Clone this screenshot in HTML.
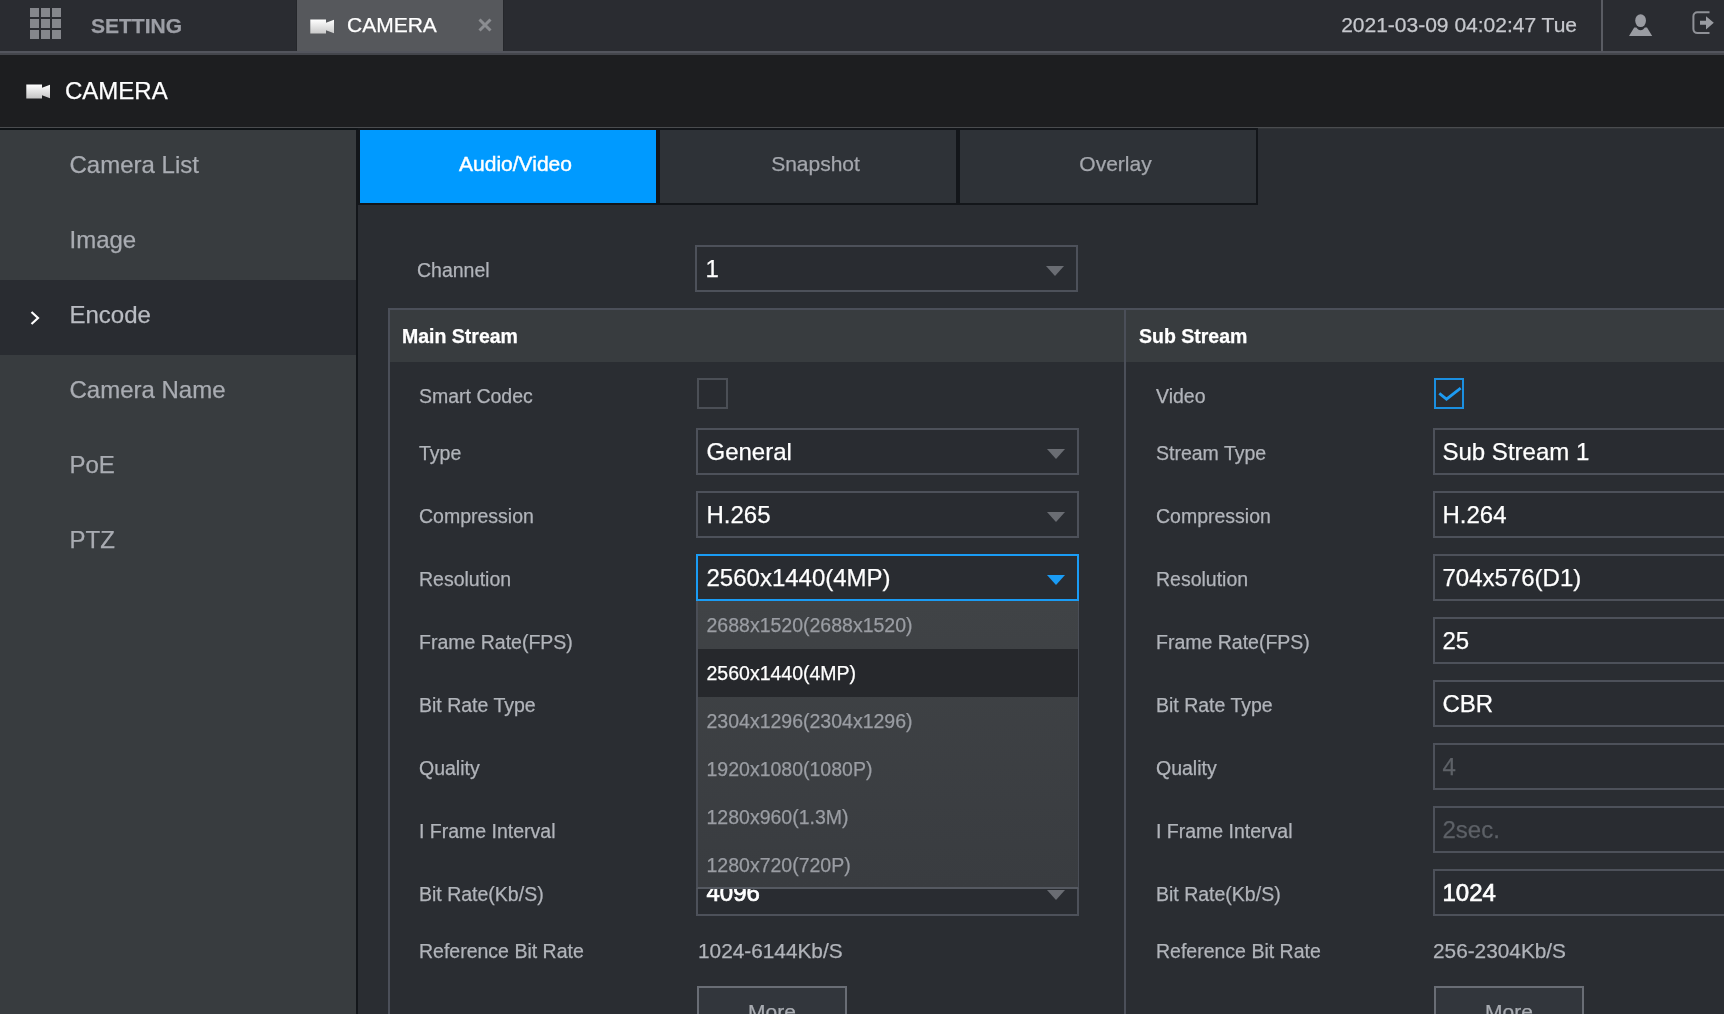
<!DOCTYPE html>
<html lang="en">
<head>
<meta charset="utf-8">
<title>CAMERA - Encode</title>
<style>
*{box-sizing:border-box;margin:0;padding:0}
html,body{width:1724px;height:1014px;overflow:hidden;background:#2a2d32}
body{position:relative;font-family:"Liberation Sans",Arial,sans-serif;color:#b4b7bd;-webkit-text-stroke:0.25px}
.abs{position:absolute}
#root{position:absolute;left:0;top:0;width:1724px;height:1014px;will-change:transform}
/* top bar */
#topbar{position:absolute;left:0;top:0;width:1724px;height:51px;background:#2a2c31}
#topline{position:absolute;left:0;top:51px;width:1724px;height:4px;background:linear-gradient(#53555d 0,#53555d 50%,#44464c 50%,#44464c 100%)}
#setting{position:absolute;left:91px;top:0;height:51px;line-height:51px;font-size:21px;font-weight:bold;color:#9c9ea5}
#toptab{position:absolute;left:296px;top:0;width:208px;height:52px;background:#56585c;border-left:1px solid #25272b;border-right:1px solid #25272b}
#toptab .t{position:absolute;left:50px;top:0;line-height:49px;font-size:21px;color:#fff}
#date{position:absolute;right:147px;top:0;line-height:50px;font-size:21px;color:#c6c8cd;white-space:nowrap}
#vsep{position:absolute;left:1601px;top:0;width:2px;height:51px;background:#5a5c63}
/* header */
#header{position:absolute;left:0;top:55px;width:1724px;height:72px;background:#1d1e20}
#header .t{position:absolute;left:65px;top:0;line-height:72px;font-size:24px;color:#fff}
#hline{position:absolute;left:0;top:127px;width:1724px;height:1px;background:#4a4c4f;z-index:5}
#sdark{position:absolute;left:0;top:128px;width:358px;height:2px;background:#0f1316;z-index:5}
#hline2{position:absolute;left:1258px;top:128px;width:466px;height:1px;background:#323538}
/* sidebar */
#sidebar{position:absolute;left:0;top:129px;width:356px;height:885px;background:#383c3f}
#sidebar .it{position:absolute;left:0;width:356px;height:75px;line-height:71px;padding-left:69.5px;font-size:24px;color:#a9acb2}
#sidebar .it.cur{background:#292c31;color:#b9bcc2}
#vdiv{position:absolute;left:356px;top:129px;width:2px;height:885px;background:#13161a}
/* tabs */
.tab{position:absolute;top:128px;width:300px;height:77px;border:2px solid #13161a;background:#2e3237;text-align:center;padding-left:15px;line-height:67px;font-size:21px;color:#a4a7ad}
.tab.on{background:#009aff;color:#fff;-webkit-text-stroke:0.45px #fff}
/* form */
.lbl{position:absolute;font-size:19.5px;color:#b1b4ba;white-space:nowrap;line-height:24px}
.sel{position:absolute;height:47px;border:2px solid #4d515a;background:#292c31;font-size:24px;color:#fff;line-height:43px;padding-left:8.5px;white-space:nowrap;overflow:hidden}
.sel.dis{color:#5d6167}
.sel.b{-webkit-text-stroke:0.7px #fff}
.sel .ar{position:absolute;right:12px;top:19px;width:0;height:0;border-left:9px solid transparent;border-right:9px solid transparent;border-top:10px solid #6a6d73}
.val{position:absolute;font-size:20.8px;color:#b1b4ba;white-space:nowrap;line-height:24px}
.btn{position:absolute;width:150px;height:52px;border:2px solid #696d75;background:#32363c;font-size:21px;color:#a9acb2;text-align:center;line-height:47px}

#tbl{position:absolute;left:388px;top:308px;width:1400px;height:760px;border-left:2px solid #4b4f59;border-top:2px solid #4b4f59}
#thead{position:absolute;left:390px;top:310px;width:1340px;height:52px;background:#383c3f}
#cdiv{position:absolute;left:1124px;top:310px;width:2px;height:720px;background:#4b4f59}
.th{position:absolute;top:324px;font-size:19.5px;font-weight:bold;color:#fff;line-height:24px;white-space:nowrap}
.cb{position:absolute;width:31px;height:31px;border:2px solid #4b4f56;background:#292c31}
.cb.on{border-color:#1b8fe0}
.sel.focus{border-color:#1a9cf5}
.sel.focus .ar{border-top-color:#1a9cf5}
#dd{position:absolute;left:696px;top:601px;width:383px;height:288px;background:linear-gradient(#404346,#393c40);border-left:2px solid #4a4e57;border-right:1px solid #4a4e57;border-bottom:2px solid #555961}
#dd div{position:absolute;left:0;width:380px;height:48px;line-height:49px;padding-left:8.5px;font-size:19.5px;color:#9a9da3;white-space:nowrap}
#dd div.cur{background:#26282c;color:#fff}
</style>
</head>
<body>
<div id="root">
<div id="topbar">
<svg class="abs" style="left:30px;top:8px" width="31" height="31" viewBox="0 0 31 31"><g fill="#85878c"><rect x="0" y="0" width="9" height="9"/><rect x="11" y="0" width="9" height="9"/><rect x="22" y="0" width="9" height="9"/><rect x="0" y="11" width="9" height="9"/><rect x="11" y="11" width="9" height="9"/><rect x="22" y="11" width="9" height="9"/><rect x="0" y="22" width="9" height="9"/><rect x="11" y="22" width="9" height="9"/><rect x="22" y="22" width="9" height="9"/></g></svg>
<div id="setting">SETTING</div>
<div id="toptab">
<svg class="abs" style="left:13px;top:19px" width="25" height="15" viewBox="0 0 25 15"><defs><linearGradient id="cg1" x1="0" y1="0" x2="0" y2="1"><stop offset="0" stop-color="#ffffff"/><stop offset="1" stop-color="#c9c9c9"/></linearGradient></defs><path d="M0.3 0.5h15.700v3.200l8-3v13.600l-8-3v3.200h-15.700z" fill="url(#cg1)"/></svg>
<div class="t">CAMERA</div>
<svg class="abs" style="left:181px;top:18px" width="14" height="14" viewBox="0 0 14 14"><path d="M1.5 1.5l11 11M12.5 1.5l-11 11" stroke="#8b8d91" stroke-width="3" fill="none"/></svg>
</div>
<div id="date">2021-03-09 04:02:47 Tue</div>
<div id="vsep"></div>
<svg class="abs" style="left:1628px;top:13px" width="26" height="24" viewBox="0 0 26 24"><g fill="#9a9ca2"><ellipse cx="12.6" cy="7.6" rx="5.4" ry="6.4"/><path d="M6.2 14.6h2.2c0.9 1.6 2.4 2.6 4.2 2.6s3.300-1 4.200-2.600h2.200l5.200 8.400h-23.200z"/></g></svg>
<svg class="abs" style="left:1690px;top:9px" width="26" height="28" viewBox="0 0 26 28"><path d="M19.5 3.3h-12.1a4 4 0 0 0-4 4v12.800a4 4 0 0 0 4 4h12.100" stroke="#8f9197" stroke-width="2" fill="none"/><path d="M10 11.8h6v-4.6l7.8 6.6-7.8 6.6v-4.6h-6z" fill="#9a9ca2"/></svg>
</div>
<div id="topline"></div>
<div id="header">
<svg class="abs" style="left:26px;top:29px" width="25" height="15" viewBox="0 0 25 15"><defs><linearGradient id="cg2" x1="0" y1="0" x2="0" y2="1"><stop offset="0" stop-color="#ffffff"/><stop offset="1" stop-color="#c4c4c4"/></linearGradient></defs><path d="M0.3 0.5h15.700v3.200l8-3v13.600l-8-3v3.200h-15.700z" fill="url(#cg2)"/></svg>
<div class="t">CAMERA</div></div>
<div id="hline"></div><div id="sdark"></div><div id="hline2"></div>
<div id="sidebar">
<div class="it" style="top:0">Camera List</div>
<div class="it" style="top:75px">Image</div>
<div class="it cur" style="top:151px;line-height:69px">Encode<svg class="abs" style="left:29px;top:29px" width="12" height="18" viewBox="0 0 12 18"><path d="M2.5 3l6.5 6-6.5 6" stroke="#fff" stroke-width="2.2" fill="none"/></svg></div>
<div class="it" style="top:225px">Camera Name</div>
<div class="it" style="top:300px">PoE</div>
<div class="it" style="top:375px">PTZ</div>
</div>
<div id="vdiv"></div>
<div class="tab on" style="left:358px">Audio/Video</div>
<div class="tab" style="left:658px">Snapshot</div>
<div class="tab" style="left:958px">Overlay</div>
<div class="lbl" style="left:417px;top:258px">Channel</div>
<div class="sel" style="left:695px;top:245px;width:383px">1<i class="ar"></i></div>
<div id="tbl"></div><div id="thead"></div><div id="cdiv"></div>
<div class="th" style="left:402px">Main Stream</div>
<div class="th" style="left:1139px">Sub Stream</div>
<div class="lbl" style="left:419px;top:384px">Smart Codec</div>
<div class="cb" style="left:697px;top:378px"></div>
<div class="lbl" style="left:1156px;top:384px">Video</div>
<div class="cb on" style="left:1434px;top:378px;width:30px"><svg class="abs" style="left:-2px;top:-2px" width="30" height="31" viewBox="0 0 30 31"><path d="M5.300 15.400L12.500 21.100L26.700 10.100" stroke="#1d9cf3" stroke-width="2.800" fill="none"/></svg></div>
<div class="lbl" style="left:419px;top:441px">Type</div>
<div class="sel" style="left:696px;top:428px;width:383px">General<i class="ar"></i></div>
<div class="lbl" style="left:1156px;top:441px">Stream Type</div>
<div class="sel" style="left:1433px;top:428px;width:383px;padding-left:7.5px">Sub Stream 1</div>
<div class="lbl" style="left:419px;top:504px">Compression</div>
<div class="sel" style="left:696px;top:491px;width:383px">H.265<i class="ar"></i></div>
<div class="lbl" style="left:1156px;top:504px">Compression</div>
<div class="sel" style="left:1433px;top:491px;width:383px;padding-left:7.5px">H.264</div>
<div class="lbl" style="left:419px;top:567px">Resolution</div>
<div class="sel focus" style="left:696px;top:554px;width:383px">2560x1440(4MP)<i class="ar"></i></div>
<div class="lbl" style="left:1156px;top:567px">Resolution</div>
<div class="sel" style="left:1433px;top:554px;width:383px;padding-left:7.5px">704x576(D1)</div>
<div class="lbl" style="left:419px;top:630px">Frame Rate(FPS)</div>
<div class="sel" style="left:696px;top:617px;width:383px"><i class="ar"></i></div>
<div class="lbl" style="left:1156px;top:630px">Frame Rate(FPS)</div>
<div class="sel" style="left:1433px;top:617px;width:383px;padding-left:7.5px">25</div>
<div class="lbl" style="left:419px;top:693px">Bit Rate Type</div>
<div class="sel" style="left:696px;top:680px;width:383px"><i class="ar"></i></div>
<div class="lbl" style="left:1156px;top:693px">Bit Rate Type</div>
<div class="sel" style="left:1433px;top:680px;width:383px;padding-left:7.5px">CBR</div>
<div class="lbl" style="left:419px;top:756px">Quality</div>
<div class="sel" style="left:696px;top:743px;width:383px"><i class="ar"></i></div>
<div class="lbl" style="left:1156px;top:756px">Quality</div>
<div class="sel dis" style="left:1433px;top:743px;width:383px;padding-left:7.5px">4</div>
<div class="lbl" style="left:419px;top:819px">I Frame Interval</div>
<div class="sel" style="left:696px;top:806px;width:383px"><i class="ar"></i></div>
<div class="lbl" style="left:1156px;top:819px">I Frame Interval</div>
<div class="sel dis" style="left:1433px;top:806px;width:383px;padding-left:7.5px">2sec.</div>
<div class="lbl" style="left:419px;top:882px">Bit Rate(Kb/S)</div>
<div class="sel b" style="left:696px;top:869px;width:383px">4096<i class="ar"></i></div>
<div class="lbl" style="left:1156px;top:882px">Bit Rate(Kb/S)</div>
<div class="sel b" style="left:1433px;top:869px;width:383px;padding-left:7.5px">1024</div>
<div class="lbl" style="left:419px;top:939px">Reference Bit Rate</div>
<div class="val" style="left:698px;top:939px">1024-6144Kb/S</div>
<div class="lbl" style="left:1156px;top:939px">Reference Bit Rate</div>
<div class="val" style="left:1433px;top:939px">256-2304Kb/S</div>
<div class="btn" style="left:697px;top:986px">More</div>
<div class="btn" style="left:1434px;top:986px">More</div>
<div id="dd"><div style="top:0px">2688x1520(2688x1520)</div><div style="top:48px" class=cur>2560x1440(4MP)</div><div style="top:96px">2304x1296(2304x1296)</div><div style="top:144px">1920x1080(1080P)</div><div style="top:192px">1280x960(1.3M)</div><div style="top:240px">1280x720(720P)</div></div>
</div>
</body>
</html>
